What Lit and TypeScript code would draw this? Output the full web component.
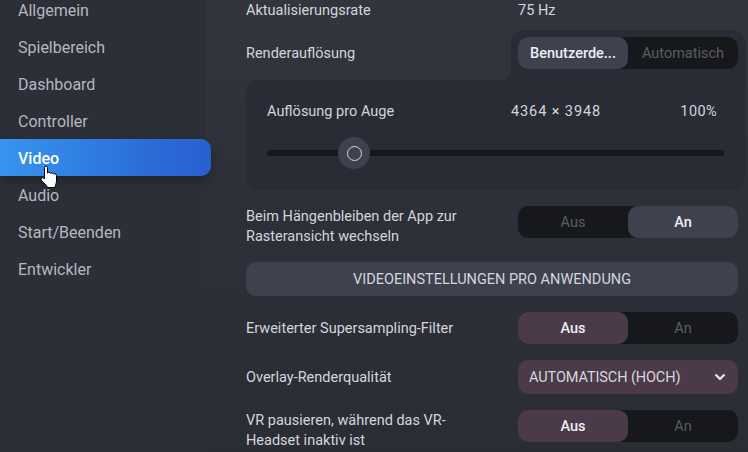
import { LitElement, css, html, type TemplateResult } from 'lit';
import { customElement, property } from 'lit/decorators.js';

const NAV = ['Allgemein', 'Spielbereich', 'Dashboard', 'Controller', 'Video', 'Audio', 'Start/Beenden', 'Entwickler'];

@customElement('seg-toggle')
export class SegToggle extends LitElement {
  @property({ type: String }) left = 'Aus';
  @property({ type: String }) right = 'An';
  @property({ type: Number }) selected = 0;
  @property({ type: Boolean }) warn = false;

  static override styles = css`
    :host {
      display: grid;
      grid-template-columns: 1fr 1fr;
      width: 220px;
      height: 32px;
      flex: none;
      background: #17181c;
      border-radius: 10px;
      font-size: 14.5px;
    }
    .opt {
      display: flex;
      align-items: center;
      justify-content: center;
      box-sizing: border-box;
      padding-top: 2px;
      color: #5a5d65;
      border-radius: 10px;
    }
    .on {
      background: #3d424e;
      color: #eef0f3;
      font-weight: 500;
    }
    .warn {
      background: #4a3a4a;
    }
  `;

  override render(): TemplateResult {
    const cls = (i: number) =>
      this.selected === i ? `opt on ${this.warn ? 'warn' : ''}` : 'opt';
    return html`
      <div class=${cls(0)}>${this.left}</div>
      <div class=${cls(1)}>${this.right}</div>
    `;
  }
}

@customElement('app-root')
export class AppRoot extends LitElement {
  static override styles = css`
    :host {
      display: flex;
      position: relative;
      width: 748px;
      height: 452px;
      overflow: hidden;
      font-family: Roboto, 'Noto Sans', sans-serif;
      font-size: 14.5px;
      line-height: 20px;
      color: #d3d6db;
      background: linear-gradient(180deg, #32353e 0%, #2d3038 45%, #2b2d35 100%);
    }
    .side {
      width: 206px;
      flex: none;
      background: #2c2f37;
      box-sizing: border-box;
    }
    .nav {
      margin-top: -9px;
      width: 211px;
      position: relative;
    }
    .item {
      height: 37px;
      box-sizing: border-box;
      display: flex;
      align-items: center;
      padding: 2px 0 0 18px;
      font-size: 16px;
      color: #b4b8c0;
    }
    .item.active {
      color: #fff;
      font-weight: 500;
      border-radius: 0 10px 10px 0;
      background: linear-gradient(90deg, #3795ee 0%, #2a6ad6 75%, #2760cf 100%);
      box-shadow: 0 4px 12px rgba(0, 0, 0, 0.25);
    }
    .main {
      flex: 1;
      min-width: 0;
      padding: 0 10px 0 40px;
      display: flex;
      flex-direction: column;
    }
    .row {
      display: flex;
      justify-content: space-between;
      align-items: flex-start;
      margin-top: 16px;
    }
    .row.center {
      align-items: center;
    }
    .label {
      padding-top: 2px;
    }
    .rate {
      display: grid;
      grid-template-columns: 272px 1fr;
      height: 20px;
      box-sizing: border-box;
      padding-top: 1px;
    }
    .tab-row {
      display: flex;
      justify-content: space-between;
      margin-top: 10px;
      height: 50px;
    }
    .tab-row .label {
      padding-top: 14px;
    }
    .tab {
      position: relative;
      margin-right: -7px;
      padding: 7px 7px 11px;
      background: #2a2c35;
      border-radius: 12px 12px 0 0;
    }
    .tab::before {
      content: '';
      position: absolute;
      left: -10px;
      bottom: 0;
      width: 10px;
      height: 10px;
      background: radial-gradient(circle at 0 0, transparent 9.5px, #2a2c35 10.5px);
    }
    .panel {
      margin-right: -7px;
      padding: 21px;
      height: 110px;
      box-sizing: border-box;
      background: #2a2c35;
      border-radius: 12px 0 12px 12px;
    }
    .panel-head {
      display: grid;
      grid-template-columns: 244px 1fr auto;
      padding: 1px 7px 0 0;
    }
    .res {
      letter-spacing: 0.9px;
    }
    .pct {
      letter-spacing: 0.4px;
    }
    .slider {
      position: relative;
      height: 32px;
      margin-top: 15px;
      display: flex;
      align-items: center;
    }
    .track {
      width: 100%;
      height: 6px;
      border-radius: 3px;
      background: #17181c;
    }
    .thumb {
      position: absolute;
      left: 71px;
      top: 0;
      width: 32px;
      height: 32px;
      border-radius: 50%;
      background: #3d424e;
      display: flex;
      align-items: center;
      justify-content: center;
    }
    .thumb span {
      width: 13px;
      height: 13px;
      border: 1.5px solid #d6d8dc;
      border-radius: 50%;
    }
    .btn {
      margin-top: 16px;
      height: 34px;
      box-sizing: border-box;
      padding-top: 2px;
      border-radius: 10px;
      background: #3d424e;
      display: flex;
      align-items: center;
      justify-content: center;
      text-transform: uppercase;
    }
    .select {
      width: 220px;
      height: 34px;
      box-sizing: border-box;
      padding: 0 12px 0 11px;
      border-radius: 10px;
      background: #4a3a4a;
      display: flex;
      align-items: center;
      justify-content: space-between;
      color: #d8d8dc;
      letter-spacing: -0.1px;
    }
    .select svg {
      width: 12px;
      height: 8px;
    }
    .wrap {
      width: 230px;
      height: 40px;
      box-sizing: border-box;
      padding-top: 1px;
    }
    .cursor {
      position: absolute;
      left: 40px;
      top: 165px;
      width: 18px;
      height: 24px;
    }
  `;

  override render(): TemplateResult {
    return html`
      <aside class="side">
        <div class="nav">
          ${NAV.map(
            (n) => html`<div class="item ${n === 'Video' ? 'active' : ''}">${n}</div>`,
          )}
        </div>
      </aside>
      <main class="main">
        <div class="rate"><span>Aktualisierungsrate</span><span>75 Hz</span></div>
        <div class="tab-row">
          <span class="label">Renderauflösung</span>
          <div class="tab">
            <seg-toggle left="Benutzerde..." right="Automatisch"></seg-toggle>
          </div>
        </div>
        <div class="panel">
          <div class="panel-head">
            <span>Auflösung pro Auge</span><span class="res">4364 × 3948</span><span class="pct">100%</span>
          </div>
          <div class="slider">
            <div class="track"></div>
            <div class="thumb"><span></span></div>
          </div>
        </div>
        <div class="row">
          <span class="wrap">Beim Hängenbleiben der App zur Rasteransicht wechseln</span>
          <seg-toggle selected="1"></seg-toggle>
        </div>
        <div class="btn">Videoeinstellungen pro Anwendung</div>
        <div class="row center">
          <span class="label">Erweiterter Supersampling-Filter</span>
          <seg-toggle warn></seg-toggle>
        </div>
        <div class="row center">
          <span class="label">Overlay-Renderqualität</span>
          <div class="select">
            <span class="label">AUTOMATISCH (HOCH)</span>
            <svg viewBox="0 0 12 8" fill="none" stroke="#eceded" stroke-width="2.2">
              <path d="M1.5 1.5 L6 6 L10.5 1.5"></path>
            </svg>
          </div>
        </div>
        <div class="row">
          <span class="wrap">VR pausieren, während das VR-Headset inaktiv ist</span>
          <seg-toggle warn></seg-toggle>
        </div>
      </main>
      <svg class="cursor" viewBox="0 0 18 24">
        <path
          d="M4.5 2.5 C4.5 .8 7.5 .8 7.5 2.5 V8 C8 7 10 7 10.5 8.5 C11 7.5 13 7.5 13.5 9 C14 8.5 16.5 8.5 16.5 10.5 V16 C16.5 18 15.5 19.5 15 22.5 H7.5 C7 20.5 4 18 1.5 15.5 C.3 14 2 12 3.8 13.2 L4.5 13.8 Z"
          fill="#fff"
          stroke="#000"
          stroke-width="1"
        ></path>
      </svg>
    `;
  }
}

declare global {
  interface HTMLElementTagNameMap {
    'app-root': AppRoot;
    'seg-toggle': SegToggle;
  }
}
